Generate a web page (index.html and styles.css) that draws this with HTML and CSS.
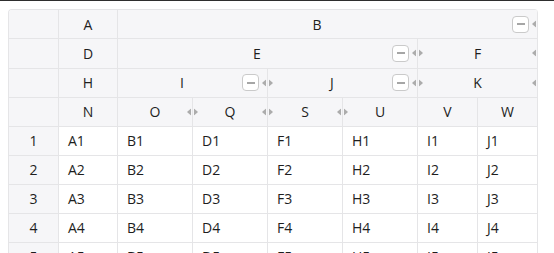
FILE: index.html
```html
<!DOCTYPE html>
<html>
<head>
<meta charset="utf-8">
<link rel="stylesheet" href="styles.css">
</head>
<body>
<div class="topline"></div>
<div class="page">
  <div class="grid">
    <!-- header row 1 -->
    <div class="hc corner"></div>
    <div class="hc"><span class="lbl">A</span></div>
    <div class="hc span6"><span class="lbl">B</span><span class="btn"></span><svg class="handle" viewBox="0 0 11 7" width="11" height="7"><polygon points="4,0 4,7 0,3.5"/><polygon points="7,0 7,7 11,3.5"/></svg></div>
    <!-- header row 2 -->
    <div class="hc corner"></div>
    <div class="hc"><span class="lbl">D</span></div>
    <div class="hc span4"><span class="lbl">E</span><span class="btn"></span><svg class="handle" viewBox="0 0 11 7" width="11" height="7"><polygon points="4,0 4,7 0,3.5"/><polygon points="7,0 7,7 11,3.5"/></svg></div>
    <div class="hc span2"><span class="lbl">F</span><svg class="handle" viewBox="0 0 11 7" width="11" height="7"><polygon points="4,0 4,7 0,3.5"/><polygon points="7,0 7,7 11,3.5"/></svg></div>
    <!-- header row 3 -->
    <div class="hc corner"></div>
    <div class="hc"><span class="lbl">H</span></div>
    <div class="hc span2"><span class="lbl">I</span><span class="btn"></span><svg class="handle" viewBox="0 0 11 7" width="11" height="7"><polygon points="4,0 4,7 0,3.5"/><polygon points="7,0 7,7 11,3.5"/></svg></div>
    <div class="hc span2"><span class="lbl">J</span><span class="btn"></span><svg class="handle" viewBox="0 0 11 7" width="11" height="7"><polygon points="4,0 4,7 0,3.5"/><polygon points="7,0 7,7 11,3.5"/></svg></div>
    <div class="hc span2"><span class="lbl">K</span><svg class="handle" viewBox="0 0 11 7" width="11" height="7"><polygon points="4,0 4,7 0,3.5"/><polygon points="7,0 7,7 11,3.5"/></svg></div>
    <!-- header row 4 -->
    <div class="hc corner"></div>
    <div class="hc"><span class="lbl">N</span></div>
    <div class="hc"><span class="lbl">O</span><svg class="handle" viewBox="0 0 11 7" width="11" height="7"><polygon points="4,0 4,7 0,3.5"/><polygon points="7,0 7,7 11,3.5"/></svg></div>
    <div class="hc"><span class="lbl">Q</span><svg class="handle" viewBox="0 0 11 7" width="11" height="7"><polygon points="4,0 4,7 0,3.5"/><polygon points="7,0 7,7 11,3.5"/></svg></div>
    <div class="hc"><span class="lbl">S</span><svg class="handle" viewBox="0 0 11 7" width="11" height="7"><polygon points="4,0 4,7 0,3.5"/><polygon points="7,0 7,7 11,3.5"/></svg></div>
    <div class="hc"><span class="lbl">U</span></div>
    <div class="hc"><span class="lbl">V</span></div>
    <div class="hc"><span class="lbl">W</span></div>

    <div class="rn">1</div><div class="c">A1</div><div class="c">B1</div><div class="c">D1</div><div class="c">F1</div><div class="c">H1</div><div class="c">I1</div><div class="c">J1</div>
    <div class="rn">2</div><div class="c">A2</div><div class="c">B2</div><div class="c">D2</div><div class="c">F2</div><div class="c">H2</div><div class="c">I2</div><div class="c">J2</div>
    <div class="rn">3</div><div class="c">A3</div><div class="c">B3</div><div class="c">D3</div><div class="c">F3</div><div class="c">H3</div><div class="c">I3</div><div class="c">J3</div>
    <div class="rn">4</div><div class="c">A4</div><div class="c">B4</div><div class="c">D4</div><div class="c">F4</div><div class="c">H4</div><div class="c">I4</div><div class="c">J4</div>
    <div class="rn">5</div><div class="c">A5</div><div class="c">B5</div><div class="c">D5</div><div class="c">F5</div><div class="c">H5</div><div class="c">I5</div><div class="c">J5</div>
    <div class="rn">6</div><div class="c">A6</div><div class="c">B6</div><div class="c">D6</div><div class="c">F6</div><div class="c">H6</div><div class="c">I6</div><div class="c">J6</div>
  </div>
</div>
</body>
</html>
```
FILE: styles.css
```css
html, body {
  margin: 0;
  padding: 0;
  background: #ffffff;
}
body {
  font-family: "Open Sans", "Noto Sans", sans-serif;
  font-size: 14px;
  color: #1e1e1e;
}
.topline {
  height: 1px;
  background: #2e2e2e;
}
.page {
  padding: 8px 0 0 8px;
}
.grid {
  display: grid;
  width: max-content;
  grid-template-columns: 50px 59px 75px 75px 75px 75px 60px 60px;
  grid-auto-rows: 29px;
  grid-template-rows: 29.25px 29.25px 29.25px 29.25px;
  border-left: 1px solid #e5e5e7;
  border-top: 1px solid #e5e5e7;
  border-radius: 4px;
  overflow: hidden;
}
.hc, .rn, .c {
  border-right: 1px solid #e5e5e7;
  border-bottom: 1px solid #e5e5e7;
  box-sizing: border-box;
  display: flex;
  align-items: center;
}
.hc {
  position: relative;
  background: #f6f6f8;
  padding: 0 8px;
  gap: 4px;
}
.span6 { grid-column: span 6; }
.span4 { grid-column: span 4; }
.span2 { grid-column: span 2; }
.lbl {
  flex: 1;
  text-align: center;
  white-space: nowrap;
}
.btn {
  width: 17px;
  height: 17px;
  box-sizing: border-box;
  border: 1px solid #cacaca;
  border-radius: 4px;
  background: #ffffff;
  flex: none;
  position: relative;
}
.btn::after {
  content: "";
  position: absolute;
  left: 3.5px;
  top: 6.5px;
  width: 8px;
  height: 2px;
  background: #a6a6a6;
}
.handle {
  position: absolute;
  right: -6px;
  top: 50%;
  transform: translateY(-50%);
  z-index: 1;
  fill: #acacac;
}
.rn {
  background: #f6f6f8;
  justify-content: center;
  padding-bottom: 2px;
}
.c {
  background: #ffffff;
  padding-left: 9px;
  padding-bottom: 2px;
}
```
